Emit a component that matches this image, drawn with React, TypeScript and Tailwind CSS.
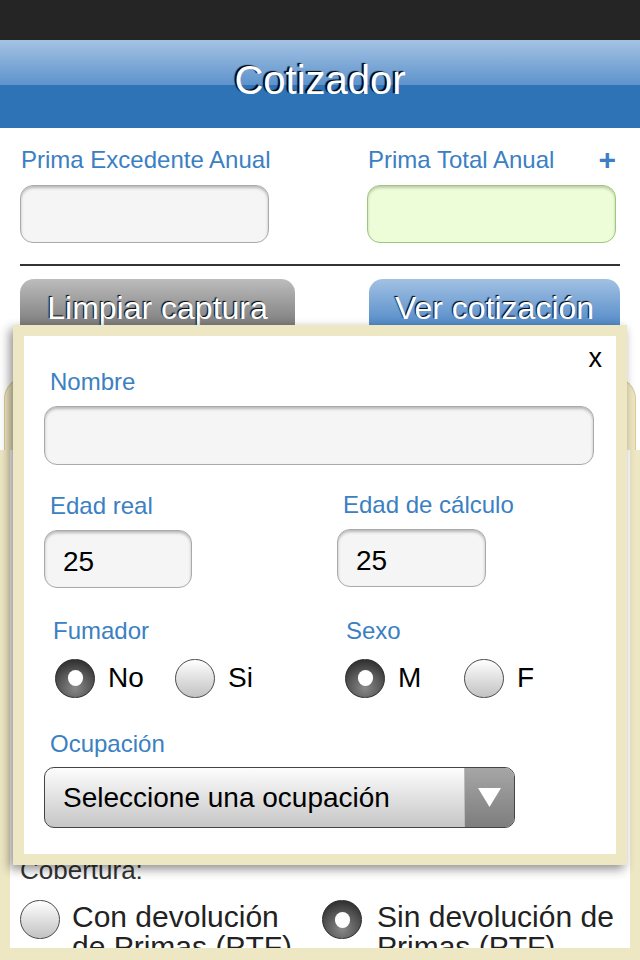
import React from "react"

const font = "font-['Liberation_Sans',Arial,sans-serif]"

function Radio({ on }: { on?: boolean }) {
  if (on) {
    return (
      <span className="flex h-[39px] w-[40px] shrink-0 items-center justify-center rounded-full border border-[#2a2a2a] bg-[radial-gradient(circle_at_50%_75%,#8a8a8a_0%,#555_50%,#333_80%)]">
        <span className="h-[16px] w-[15px] rounded-full bg-white" />
      </span>
    )
  }
  return (
    <span className="h-[39px] w-[40px] shrink-0 rounded-full border border-[#4a4a4a] bg-gradient-to-b from-white to-[#c2c2c2]" />
  )
}

function TextBox({ value, className }: { value?: string; className: string }) {
  return (
    <div
      className={
        "flex items-center rounded-[13px] border border-[#aaa] bg-[#f5f5f5] pl-[18px] pt-[5px] text-[28px] text-black shadow-[inset_0_2px_3px_rgba(0,0,0,0.25)] " +
        className
      }
    >
      {value}
    </div>
  )
}

export default function App() {
  return (
    <div className={"relative h-[960px] w-[640px] overflow-hidden bg-white " + font}>
      <div className="h-[40px] bg-[#262526]" />
      <div className="flex h-[88px] items-center justify-center bg-[linear-gradient(to_bottom,#a4c3e3_0%,#5e93cc_51%,#2e73b6_51%,#2e73b6_100%)] pb-[8px]">
        <h1 className="text-[40px] leading-none text-white [text-shadow:-2px_-1px_1px_#000]">Cotizador</h1>
      </div>

      <div className="px-[20px]">
        <div className="mt-[18px] grid grid-cols-[347px_1fr]">
          <div>
            <div className="pl-[1px] text-[24px] leading-[28px] text-[#3b80c2]">Prima Excedente Anual</div>
            <TextBox className="mt-[11px] h-[58px] w-[249px]" />
          </div>
          <div>
            <div className="flex items-center justify-between pl-[1px] pr-[4px] text-[24px] leading-[28px] text-[#3b80c2]">
              <span>Prima Total Anual</span>
              <span className="text-[30px] font-bold">+</span>
            </div>
            <div className="mt-[11px] h-[58px] w-[249px] rounded-[13px] border border-[#9cc77c] bg-[#edfdd8] shadow-[inset_0_2px_3px_rgba(0,0,0,0.2)]" />
          </div>
        </div>

        <div className="mt-[21px] h-[2px] bg-[#333]" />

        <div className="mt-[13px] flex justify-between">
          <button className="h-[60px] w-[275px] rounded-t-[14px] bg-gradient-to-b from-[#bdbdbd] to-[#6c6c6c] pb-[2px] text-[32px] text-white [text-shadow:-1px_-1px_1px_#000]">
            Limpiar captura
          </button>
          <button className="h-[60px] w-[251px] rounded-t-[14px] bg-gradient-to-b from-[#a2c1e3] to-[#3a7bc0] pb-[2px] text-[32px] text-white [text-shadow:-1px_-1px_1px_#000]">
            Ver cotización
          </button>
        </div>
      </div>

      {/* page content behind the dialog */}
      <div className="mt-[38px] mx-[4px] h-[73px] rounded-t-[22px] border border-b-0 border-[#dccb93] bg-[#eee6c2]" />
      <div className="bg-[#eee7c4] px-[10px] pb-[12px]">
        <div className="h-[498px] overflow-hidden bg-white pl-[10px] pt-[405px]">
          <div className="text-[26px] leading-[30px] text-[#333]">Cobertura:</div>
          <div className="mt-[15px] grid grid-cols-[302px_1fr]">
            <div className="flex items-start gap-[12px]">
              <Radio />
              <span className="mt-[2px] text-[30px] leading-[30px] text-[#222]">
                Con devolución
                <br />
                de Primas (PTF)
              </span>
            </div>
            <div className="flex items-start gap-[15px]">
              <Radio on />
              <span className="mt-[2px] text-[30px] leading-[30px] text-[#222]">
                Sin devolución de
                <br />
                Primas (PTF)
              </span>
            </div>
          </div>
        </div>
      </div>

      {/* dialog */}
      <div className="absolute left-[13px] top-[325px] h-[540px] w-[614px] bg-[#eee7c4] p-[11px] shadow-[-3px_4px_10px_rgba(0,0,0,0.45)]">
        <div className="relative h-full bg-white px-[20px] pt-[32px]">
          <span className="absolute right-[14px] top-[2px] text-[27px] text-black">x</span>

          <div className="pl-[6px] text-[24px] leading-[28px] text-[#3b80c2]">Nombre</div>
          <TextBox className="mt-[10px] h-[59px] w-[550px]" />

          <div className="mt-[27px] grid grid-cols-[293px_1fr]">
            <div>
              <div className="pl-[6px] text-[24px] leading-[28px] text-[#3b80c2]">Edad real</div>
              <TextBox value="25" className="mt-[10px] h-[58px] w-[148px]" />
            </div>
            <div className="-mt-[1px]">
              <div className="pl-[6px] text-[24px] leading-[28px] text-[#3b80c2]">Edad de cálculo</div>
              <TextBox value="25" className="mt-[10px] h-[58px] w-[149px]" />
            </div>
          </div>

          <div className="mt-[29px] grid grid-cols-[291px_1fr]">
            <div>
              <div className="pl-[9px] text-[24px] leading-[28px] text-[#3b80c2]">Fumador</div>
              <div className="mt-[12px] flex items-center pl-[11px] text-[28px] text-black">
                <Radio on />
                <span className="ml-[13px] w-[67px]">No</span>
                <Radio />
                <span className="ml-[13px]">Si</span>
              </div>
            </div>
            <div>
              <div className="pl-[11px] text-[24px] leading-[28px] text-[#3b80c2]">Sexo</div>
              <div className="mt-[12px] flex items-center pl-[10px] text-[28px] text-black">
                <Radio on />
                <span className="ml-[13px] w-[66px]">M</span>
                <Radio />
                <span className="ml-[13px]">F</span>
              </div>
            </div>
          </div>

          <div className="mt-[31px] pl-[6px] text-[24px] leading-[28px] text-[#3b80c2]">Ocupación</div>
          <div className="mt-[9px] flex h-[61px] w-[471px] overflow-hidden rounded-[10px] border border-[#444] bg-gradient-to-b from-[#fdfdfd] to-[#c6c6c6]">
            <span className="flex flex-1 items-center pl-[18px] text-[28px] text-black">Seleccione una ocupación</span>
            <span className="flex w-[50px] items-center justify-center border-l border-[#bbb] bg-gradient-to-b from-[#a6a6a6] to-[#7e7e7e]">
              <svg width="23" height="19" viewBox="0 0 23 19">
                <polygon points="0,0 23,0 11.5,19" fill="#fff" />
              </svg>
            </span>
          </div>
        </div>
      </div>
    </div>
  )
}
